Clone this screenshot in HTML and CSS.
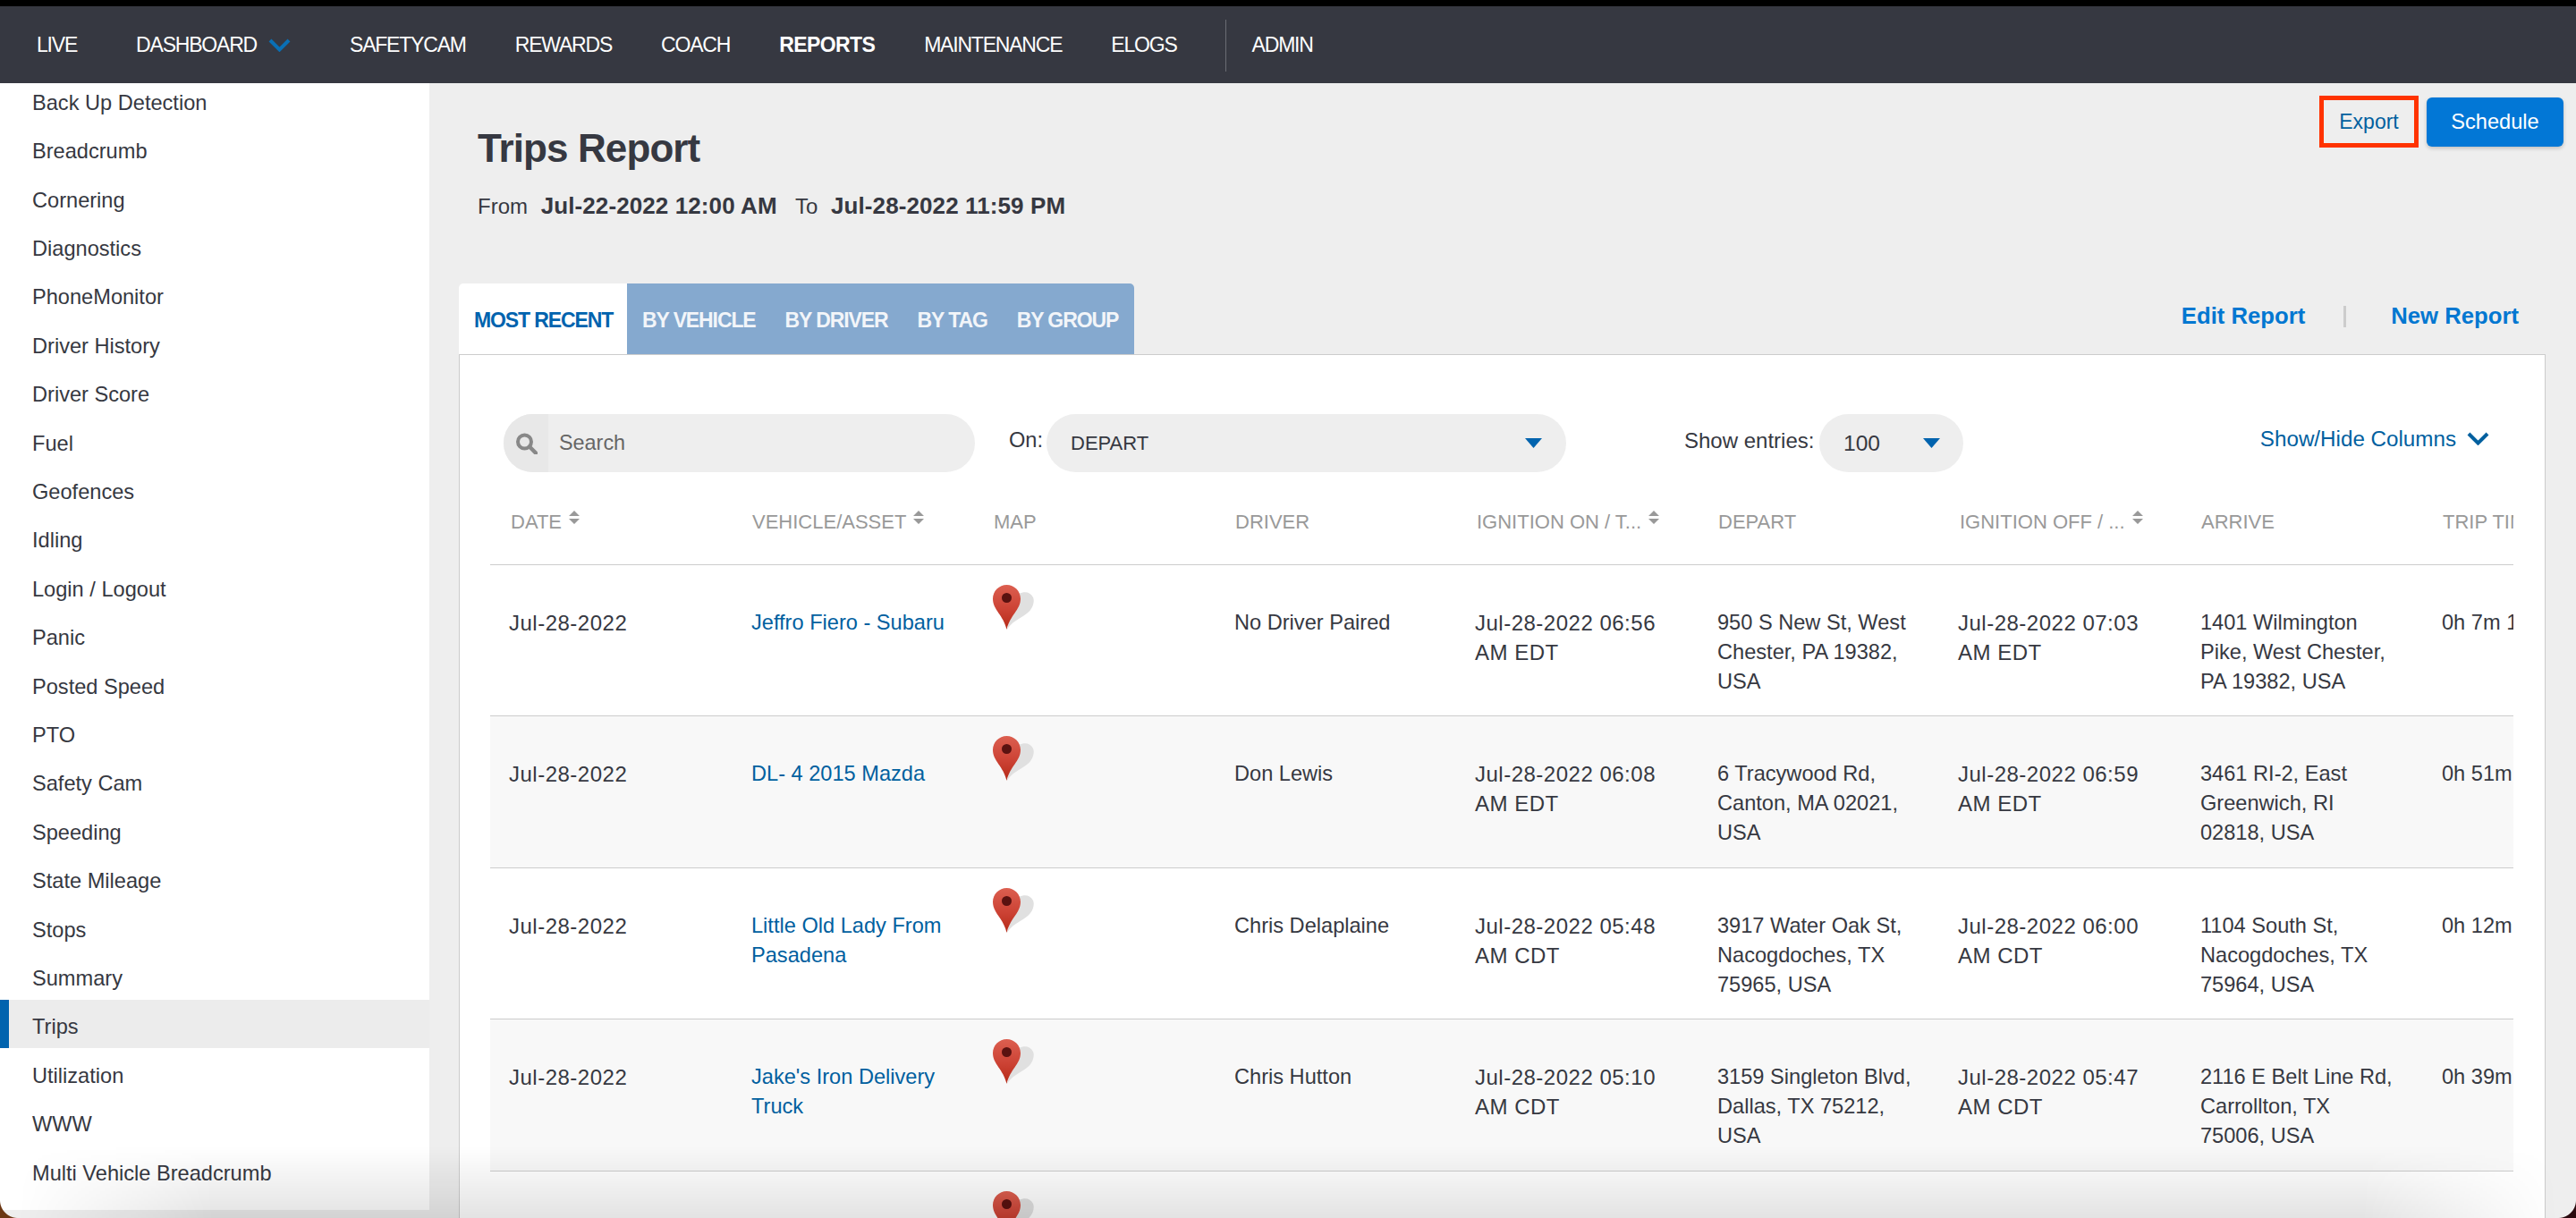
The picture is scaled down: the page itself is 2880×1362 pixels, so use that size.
FILE: index.html
```html
<!DOCTYPE html>
<html lang="en">
<head>
<meta charset="utf-8">
<title>Trips Report</title>
<link rel="stylesheet" href="styles.css">
</head>
<body>
<svg class="defs" width="0" height="0" aria-hidden="true">
  <defs>
    <linearGradient id="pinfill" x1="0" y1="0" x2="0" y2="1">
      <stop offset="0" stop-color="#dc5f50"/>
      <stop offset="0.55" stop-color="#cc4234"/>
      <stop offset="1" stop-color="#b52a18"/>
    </linearGradient>
    <symbol id="pin" viewBox="0 0 46 50">
      <path d="M16 50C20 42 30 38 38 32C45 27 47 18 45 14C42 8 36 7 29 10L20 30Z" fill="#e0e0e0"/>
      <path d="M15.5 0C7 0 0 7 0 15.5C0 28 12 34 15.5 50C19 34 31 28 31 15.5C31 7 24 0 15.5 0Z" fill="url(#pinfill)"/>
      <circle cx="15.5" cy="14.5" r="5.5" fill="#5a1210"/>
    </symbol>
    <symbol id="sort" viewBox="0 0 12 15">
      <path d="M6 0L12 6H0Z M0 9H12L6 15Z" fill="#999"/>
    </symbol>
    <symbol id="chev" viewBox="0 0 25 15">
      <path d="M2 2L12.5 12.5L23 2" fill="none" stroke="currentColor" stroke-width="4"/>
    </symbol>
    <symbol id="tri" viewBox="0 0 19 11">
      <path d="M0 0H19L9.5 11Z" fill="#0063ae"/>
    </symbol>
  </defs>
</svg>

<div class="window">
  <nav class="topnav">
    <a class="nav-item">LIVE</a>
    <a class="nav-item nav-drop">DASHBOARD <svg class="nav-chev"><use href="#chev"/></svg></a>
    <a class="nav-item">SAFETYCAM</a>
    <a class="nav-item">REWARDS</a>
    <a class="nav-item">COACH</a>
    <a class="nav-item nav-active">REPORTS</a>
    <a class="nav-item">MAINTENANCE</a>
    <a class="nav-item">ELOGS</a>
    <span class="nav-sep"></span>
    <a class="nav-item">ADMIN</a>
  </nav>

  <div class="content">
    <aside class="sidebar">
      <ul class="side-list">
        <li>Back Up Detection</li>
        <li>Breadcrumb</li>
        <li>Cornering</li>
        <li>Diagnostics</li>
        <li>PhoneMonitor</li>
        <li>Driver History</li>
        <li>Driver Score</li>
        <li>Fuel</li>
        <li>Geofences</li>
        <li>Idling</li>
        <li>Login / Logout</li>
        <li>Panic</li>
        <li>Posted Speed</li>
        <li>PTO</li>
        <li>Safety Cam</li>
        <li>Speeding</li>
        <li>State Mileage</li>
        <li>Stops</li>
        <li>Summary</li>
        <li class="side-active">Trips</li>
        <li>Utilization</li>
        <li>WWW</li>
        <li>Multi Vehicle Breadcrumb</li>
      </ul>
    </aside>

    <main class="main">
      <header class="page-head">
        <div class="page-title">
          <h1>Trips Report</h1>
          <p class="range">From <b>Jul-22-2022 12:00 AM</b> To <b>Jul-28-2022 11:59 PM</b></p>
        </div>
        <div class="actions">
          <a class="btn-export">Export</a>
          <a class="btn-schedule">Schedule</a>
        </div>
      </header>

      <div class="tabbar">
        <div class="tabs">
          <a class="tab tab-on">MOST RECENT</a>
          <div class="tab-rest">
            <a class="tab">BY VEHICLE</a>
            <a class="tab">BY DRIVER</a>
            <a class="tab">BY TAG</a>
            <a class="tab">BY GROUP</a>
          </div>
        </div>
        <div class="report-links">
          <a>Edit Report</a>
          <span class="link-sep"></span>
          <a>New Report</a>
        </div>
      </div>

      <section class="panel">
        <div class="controls">
          <div class="search">
            <span class="search-icon">
              <svg width="25" height="24" viewBox="0 0 25 24"><circle cx="10.5" cy="10" r="7.5" fill="none" stroke="#888" stroke-width="4"/><path d="M16 15.5L23 22.5" stroke="#888" stroke-width="4.5" stroke-linecap="round"/></svg>
            </span>
            <span class="search-text">Search</span>
          </div>
          <label class="on-label">On:</label>
          <div class="select select-on">DEPART <svg class="tri"><use href="#tri"/></svg></div>
          <label class="entries-label">Show entries:</label>
          <div class="select select-entries">100 <svg class="tri"><use href="#tri"/></svg></div>
          <a class="columns">Show/Hide Columns <svg class="col-chev"><use href="#chev"/></svg></a>
        </div>

        <div class="table-wrap">
          <table class="trips">
            <thead>
              <tr>
                <th>DATE <svg class="sort"><use href="#sort"/></svg></th>
                <th>VEHICLE/ASSET <svg class="sort"><use href="#sort"/></svg></th>
                <th>MAP</th>
                <th>DRIVER</th>
                <th>IGNITION ON / T... <svg class="sort"><use href="#sort"/></svg></th>
                <th>DEPART</th>
                <th>IGNITION OFF / ... <svg class="sort"><use href="#sort"/></svg></th>
                <th>ARRIVE</th>
                <th>TRIP TIME</th>
              </tr>
            </thead>
            <tbody>
              <tr>
                <td class="dt">Jul-28-2022</td>
                <td><a>Jeffro Fiero - Subaru</a></td>
                <td class="map"><svg class="pin"><use href="#pin"/></svg></td>
                <td>No Driver Paired</td>
                <td class="dt">Jul-28-2022 06:56<br>AM EDT</td>
                <td>950 S New St, West<br>Chester, PA 19382,<br>USA</td>
                <td class="dt">Jul-28-2022 07:03<br>AM EDT</td>
                <td>1401 Wilmington<br>Pike, West Chester,<br>PA 19382, USA</td>
                <td>0h 7m 12s</td>
              </tr>
              <tr>
                <td class="dt">Jul-28-2022</td>
                <td><a>DL- 4 2015 Mazda</a></td>
                <td class="map"><svg class="pin"><use href="#pin"/></svg></td>
                <td>Don Lewis</td>
                <td class="dt">Jul-28-2022 06:08<br>AM EDT</td>
                <td>6 Tracywood Rd,<br>Canton, MA 02021,<br>USA</td>
                <td class="dt">Jul-28-2022 06:59<br>AM EDT</td>
                <td>3461 RI-2, East<br>Greenwich, RI<br>02818, USA</td>
                <td>0h 51m</td>
              </tr>
              <tr>
                <td class="dt">Jul-28-2022</td>
                <td><a>Little Old Lady From<br>Pasadena</a></td>
                <td class="map"><svg class="pin"><use href="#pin"/></svg></td>
                <td>Chris Delaplaine</td>
                <td class="dt">Jul-28-2022 05:48<br>AM CDT</td>
                <td>3917 Water Oak St,<br>Nacogdoches, TX<br>75965, USA</td>
                <td class="dt">Jul-28-2022 06:00<br>AM CDT</td>
                <td>1104 South St,<br>Nacogdoches, TX<br>75964, USA</td>
                <td>0h 12m</td>
              </tr>
              <tr>
                <td class="dt">Jul-28-2022</td>
                <td><a>Jake's Iron Delivery<br>Truck</a></td>
                <td class="map"><svg class="pin"><use href="#pin"/></svg></td>
                <td>Chris Hutton</td>
                <td class="dt">Jul-28-2022 05:10<br>AM CDT</td>
                <td>3159 Singleton Blvd,<br>Dallas, TX 75212,<br>USA</td>
                <td class="dt">Jul-28-2022 05:47<br>AM CDT</td>
                <td>2116 E Belt Line Rd,<br>Carrollton, TX<br>75006, USA</td>
                <td>0h 39m</td>
              </tr>
              <tr>
                <td></td>
                <td></td>
                <td class="map"><svg class="pin"><use href="#pin"/></svg></td>
                <td></td>
                <td></td>
                <td></td>
                <td></td>
                <td></td>
                <td></td>
              </tr>
            </tbody>
          </table>
        </div>
      </section>
    </main>
  </div>
  <div class="window-fade"></div>
  <span class="corner corner-left"></span>
  <span class="corner corner-right"></span>
</div>
</body>
</html>
```

FILE: styles.css
```css
* { box-sizing: border-box; }
html, body { margin: 0; height: 1362px; overflow: hidden; }
body {
  background: #000;
  font-family: "Liberation Sans", Arial, sans-serif;
  font-size: 24px;
  color: #363841;
}
a { cursor: pointer; }
.defs { position: absolute; }

.window {
  position: relative;
  height: 1362px;
  display: flex;
  flex-direction: column;
  overflow: hidden;
  padding-top: 7px;
  background: #000;
}

/* top nav */
.topnav {
  flex: 0 0 86px;
  display: flex;
  align-items: center;
  gap: 55px;
  padding: 1px 0 0 41px;
  background: #363841;
  color: #fff;
  font-size: 23px;
  letter-spacing: -1.2px;
}
.nav-item { white-space: nowrap; }
.nav-active { font-weight: 700; letter-spacing: -.6px; }
.nav-drop { display: flex; align-items: center; gap: 13px; margin: 0 11px; }
.nav-chev { width: 25px; height: 15px; color: #0a6fb4; }
.nav-sep { width: 1px; height: 58px; background: #6a6c74; margin: 0 -26px 0 -1px; }

/* layout */
.content { flex: 1; display: flex; min-height: 0; background: #eee; }
.sidebar {
  flex: 0 0 480px;
  height: 1260px;
  background: #fff;
  overflow: hidden;
}
.side-list { list-style: none; margin: -8.6px 0 0; padding: 0; font-size: 23.6px; }
.side-list li {
  height: 54.4px;
  line-height: 54.4px;
  padding: 3.5px 0 0 36px;
  color: #363841;
}
.side-list .side-active {
  background: #ececec;
  border-left: 10px solid #0063ae;
  padding: 3px 0 0 26px;
}

.main { flex: 1; min-width: 0; padding: 0 14px 0 33px; }

.page-head { height: 224px; display: flex; justify-content: space-between; align-items: flex-start; }
.page-title { padding: 48px 0 0 21px; }
.page-title h1 { margin: 0; font-size: 44px; line-height: 50px; font-weight: 700; letter-spacing: -.9px; }
.range { margin: 23px 0 0; font-size: 24px; line-height: 33px; word-spacing: 8px; }
.range b { font-size: 26px; letter-spacing: .1px; word-spacing: 0; margin-right: 6px; }

.actions { display: flex; align-items: center; gap: 9px; padding-top: 14px; }
.btn-export {
  width: 111px;
  height: 58px;
  line-height: 48px;
  text-align: center;
  border: 5px solid #ff3300;
  color: #00609f;
  font-size: 23px;
}
.btn-schedule {
  width: 153px;
  height: 55px;
  line-height: 54px;
  text-align: center;
  background: #0277d6;
  color: #fff;
  border-radius: 6px;
  font-size: 23.6px;
  box-shadow: 0 2px 4px rgba(0, 0, 0, .2);
}

/* tabs */
.tabbar { display: flex; justify-content: space-between; height: 79px; margin-right: 20px; }
.tabs { display: flex; font-size: 23px; font-weight: 700; letter-spacing: -1.1px; }
.tab { line-height: 83px; white-space: nowrap; }
.tab-on {
  width: 188px;
  padding-left: 17px;
  background: #fff;
  color: #0063ae;
  border-radius: 5px 0 0 0;
}
.tab-rest {
  display: flex;
  gap: 33px;
  width: 567px;
  padding-left: 17px;
  background: #85a9cf;
  color: #f2f5f9;
  border-radius: 0 5px 0 0;
}
.report-links {
  display: flex;
  align-items: center;
  height: 72px;
  padding-right: 30px;
  color: #0277d1;
  font-size: 25.7px;
  font-weight: 700;
}
.link-sep { width: 3px; height: 24px; background: #ccc; margin: 2px 50px 0 43px; }

/* panel */
.panel {
  margin-right: 20px;
  height: 980px;
  padding: 66px 34px 0;
  background: #fff;
  border: 1px solid #ccc;
  border-bottom: 0;
  overflow: hidden;
}
.controls { display: flex; align-items: center; height: 65px; padding: 0 28px 0 15px; }
.search {
  width: 527px;
  height: 65px;
  display: flex;
  align-items: center;
  border-radius: 33px;
  background: #eee;
  overflow: hidden;
  color: #666;
  font-size: 23.4px;
}
.search-icon {
  flex: 0 0 50px;
  height: 65px;
  display: flex;
  align-items: center;
  justify-content: flex-end;
  padding-right: 12px;
  background: #e8e8e8;
}
.search-text { margin-left: 12px; }
.on-label { margin-left: 38px; margin-top: -6px; font-size: 23.6px; width: 42px; }
.entries-label { margin-left: 132px; margin-top: -6px; font-size: 24px; white-space: nowrap; width: 151px; }
.select {
  height: 65px;
  display: flex;
  align-items: center;
  justify-content: space-between;
  background: #eee;
  border-radius: 33px;
  color: #363841;
}
.select-on { width: 581px; padding: 0 27px; font-size: 22px; }
.select-entries { width: 161px; padding: 0 26px 0 27px; font-size: 24.6px; }
.tri { width: 19px; height: 11px; }
.columns {
  margin-left: auto;
  margin-top: -10px;
  display: flex;
  align-items: center;
  gap: 12px;
  color: #00609f;
  font-size: 24.2px;
}
.col-chev { width: 25px; height: 15px; color: #00609f; }

/* table */
.table-wrap { width: 2262px; overflow: hidden; }
.trips { width: 2430px; table-layout: fixed; border-collapse: collapse; font-size: 23.6px; line-height: 33px; }
.trips th {
  width: 270px;
  height: 103px;
  padding: 8px 0 0 23px;
  text-align: left;
  font-size: 22px;
  font-weight: 400;
  color: #999;
  white-space: nowrap;
  overflow: hidden;
  border-bottom: 1px solid #ccc;
}
.sort { width: 12px; height: 15px; margin-left: 2px; vertical-align: 5px; }
.trips td {
  height: 169.5px;
  padding: 48px 0 0 22px;
  vertical-align: top;
  white-space: nowrap;
  overflow: hidden;
  border-bottom: 1px solid #ccc;
  color: #363841;
}
.trips td.dt { font-size: 24px; letter-spacing: .5px; padding-left: 21px; }
.trips td a { color: #00609f; }
.trips tbody tr:nth-child(even) { background: #f8f8f8; }
.trips td.map { padding: 22px 0 0 22px; }
.pin { display: block; width: 46px; height: 50px; }

/* macOS window edge caught by the screenshot */
.window-fade {
  position: absolute;
  left: 0;
  right: 0;
  bottom: 0;
  height: 80px;
  background: linear-gradient(to bottom, rgba(0, 0, 0, 0), rgba(0, 0, 0, .11));
  -webkit-mask-image: linear-gradient(to right, transparent 20px, #000 240px, #000 calc(100% - 240px), transparent calc(100% - 20px));
  mask-image: linear-gradient(to right, transparent 20px, #000 240px, #000 calc(100% - 240px), transparent calc(100% - 20px));
  pointer-events: none;
}
.corner { position: absolute; bottom: 0; width: 20px; height: 20px; pointer-events: none; }
.corner-left { left: 0; background: radial-gradient(circle at 100% 0, transparent 19.5px, #6b3713 20.5px); }
.corner-right { right: 0; background: radial-gradient(circle at 0 0, transparent 19.5px, #2a0a0e 20.5px); }
```
